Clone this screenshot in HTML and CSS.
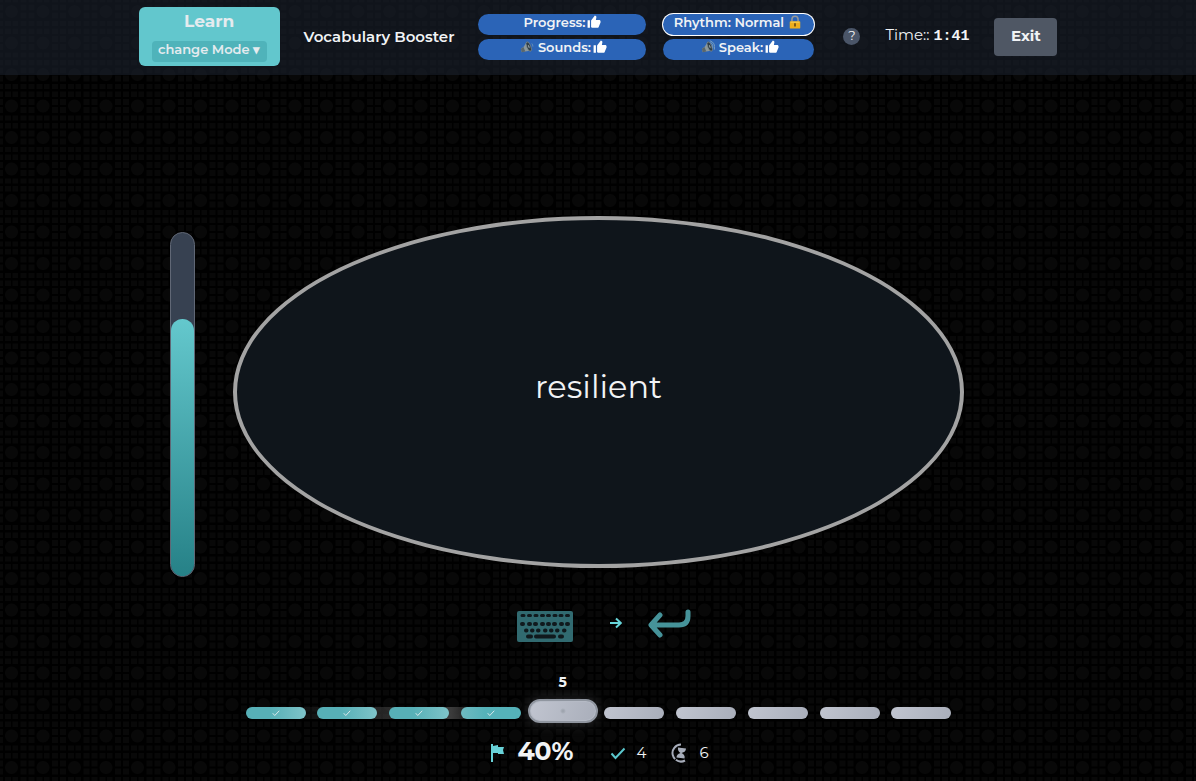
FILE: index.html
```html
<!DOCTYPE html>
<html lang="en">
<head>
<meta charset="utf-8">
<meta name="viewport" content="width=device-width, initial-scale=1">
<title>Vocabulary Booster</title>
<link rel="stylesheet" href="styles.css">
</head>
<body>
<svg class="sprite" aria-hidden="true">
  <symbol id="thumb" viewBox="0 0 24 24"><path d="M1 9h4v13H1zM7 21V9.500L13.500 1l1.500.6c1 .5 1.300 1.400 1.100 2.400L15.200 8.500H21c1.300 0 2.200 1 2.200 2.200v2L20 20.500c-.4 1-1.200 1.500-2.200 1.500H9z"/></symbol>
  <symbol id="tick" viewBox="0 0 16 16"><path d="M1.500 8.500l4 4.500L14.500 3.500"/></symbol>
  <symbol id="speaker" viewBox="0 0 16 16"><path d="M1 10l3-2 4-6 5 10-7 1-4 1z" fill="#8b989d"/><path d="M1 10l3-2 2 5-4 1z" fill="#59666c"/><ellipse cx="10" cy="7.500" rx="2.300" ry="5.800" transform="rotate(-22 10 7.500)" fill="#2f3d45" stroke="#7d8b91" stroke-width=".8"/><ellipse cx="10" cy="7.500" rx=".8" ry="2" transform="rotate(-22 10 7.500)" fill="#8c999e"/></symbol>
</svg>
<header class="topbar">
  <div class="mode">
    <span class="mode-name">Learn</span>
    <button class="mode-change" type="button">change Mode ▾</button>
  </div>
  <h1 class="title">Vocabulary Booster</h1>
  <div class="options">
    <button class="pill" type="button">Progress: <svg class="thumb"><use href="#thumb"/></svg></button>
    <button class="pill locked" type="button">Rhythm: Normal
      <svg class="emoji" viewBox="0 0 16 16"><path d="M4.500 7.500V5a3.500 3.500 0 0 1 7 0v2.500" fill="none" stroke="#96989a" stroke-width="1.800"/><rect x="2" y="7" width="12" height="8.500" rx="1" fill="#eeae1c"/><path d="M3 8.200h10" stroke="#fbd25d" stroke-width="1"/><path d="M8 9.500v3.500" stroke="#5f4314" stroke-width="1.800"/></svg>
    </button>
    <button class="pill" type="button">
      <svg class="emoji" viewBox="0 0 16 16"><use href="#speaker"/><path d="M13.500 4q1.300 1.500 1.200 3.500" fill="none" stroke="#6d93b5"/></svg>
      Sounds: <svg class="thumb"><use href="#thumb"/></svg></button>
    <button class="pill" type="button">
      <svg class="emoji" viewBox="0 0 16 16"><use href="#speaker"/><path d="M11 2.500q3.500 2.500 2.500 7M10 .8q7 2.200 5.300 10.200" fill="none" stroke="#7fa3c0"/></svg>
      Speak: <svg class="thumb"><use href="#thumb"/></svg></button>
  </div>
  <button class="help" type="button" aria-label="Help">?</button>
  <div class="time">Time:: <b>1:41</b></div>
  <button class="exit" type="button">Exit</button>
</header>
<main class="stage">
  <div class="play">
    <div class="meter" role="img" aria-label="Time left"><div class="meter-fill" style="height:75%"></div></div>
    <div class="word">resilient</div>
  </div>
  <div class="keys">
    <svg class="keyboard" viewBox="0 0 58 33"><rect x="1" y="1" width="56" height="31" rx="2"/><path class="keycaps" d="M6 5.500h2M12.500 5.500h2M19 5.500h2M25.500 5.500h2M31.500 5.500h2M38 5.500h2M44 5.500h2M50.500 5.500h2"/><path class="keycaps tall" d="M6 14h1M13 14h1M19 14h1M26 14h1M32 14h1M38 14h1M45 14h1M51 14h1M10 20.500h.5M16 20.500h.5M22 20.500h.5M29 20.500h.5M35 20.500h.5M41 20.500h.5M48 20.500h.5M12 26.500h3M20 26.500h18M44 26.500h2"/></svg>
    <svg class="arrow" viewBox="0 0 12 12"><path d="M0 6h10M6 1.500L10.700 6 6 10.500"/></svg>
    <svg class="enter" viewBox="0 0 44 30"><path d="M12 6L3 16l9 10M4 16h27q9 0 9-9V3"/></svg>
  </div>
  <ol class="steps">
    <li class="step done"><svg><use href="#tick"/></svg></li>
    <li class="step done"><svg><use href="#tick"/></svg></li>
    <li class="step done"><svg><use href="#tick"/></svg></li>
    <li class="step done latest"><svg><use href="#tick"/></svg></li>
    <li class="step current"><span class="step-number">5</span></li>
    <li class="step"></li>
    <li class="step"></li>
    <li class="step"></li>
    <li class="step"></li>
    <li class="step"></li>
  </ol>
  <div class="stats">
    <svg class="flag" viewBox="0 0 14 18"><path d="M0 0h2v18H0z"/><path d="M2 2l5-1v2h6l-1 3 1 4H7V9H2z"/></svg>
    <strong class="percent">40%</strong>
    <svg class="check"><use href="#tick"/></svg>
    <span class="count right">4</span>
    <svg class="hourglass" viewBox="0 0 18 20"><path class="ring" d="M11 1.500A8.500 8.500 0 1 0 15 17.500"/><path d="M8 4.500l8 1q0 3.500-4.500 4.500 4 2 3 5.500l-8-1q0-3.500 4-4.500-3-2-2.500-5.500z"/></svg>
    <span class="count">6</span>
  </div>
</main>
</body>
</html>
```

FILE: styles.css
```css
* { box-sizing: border-box; }
body {
  margin: 0;
  min-height: 100vh;
  display: flex;
  flex-direction: column;
  font-family: Montserrat, Inter, sans-serif;
  color: #f1f3f5;
  background: #000 url("data:image/svg+xml,%3Csvg xmlns='http://www.w3.org/2000/svg' viewBox='0 0 126 126'%3E%3Cdefs%3E%3Cg id='t' fill='%23080808'%3E%3Ccircle cx='23' cy='23' r='13'/%3E%3Cpath d='M41 9h12v12H41zM57 9h12v12H57zM41 25h12v12H41zM57 25h12v12H57zM10 42h12v10H10zM25 42h11v10H25zM41 42h12v10H41zM57 42h12v10H57zM10 57h12v11H10zM25 57h11v11H25zM41 57h12v11H41zM57 57h12v11H57z'/%3E%3C/g%3E%3C/defs%3E%3Cuse href='%23t'/%3E%3Cuse href='%23t' x='63'/%3E%3Cuse href='%23t' x='-63'/%3E%3Cuse href='%23t' y='63'/%3E%3Cuse href='%23t' x='63' y='63'/%3E%3Cuse href='%23t' x='-63' y='63'/%3E%3Cuse href='%23t' y='-63'/%3E%3Cuse href='%23t' x='63' y='-63'/%3E%3Cuse href='%23t' x='-63' y='-63'/%3E%3C/svg%3E") 0 0 / 63px 63px;
}
button { font: inherit; color: inherit; border: 0; padding: 0; cursor: pointer; }
.sprite { display: none; }

.topbar {
  display: flex;
  justify-content: center;
  align-items: center;
  min-height: 75px;
  padding-bottom: 2px;
  background: rgba(26, 32, 44, .62);
}
.mode {
  width: 141px;
  height: 59px;
  display: flex;
  flex-direction: column;
  align-items: center;
  justify-content: space-between;
  padding: 4px 0;
  border-radius: 6px;
  background: #62c7cd;
  color: #e5ebef;
}
.mode-name { font-size: 17px; font-weight: 700; line-height: 20px; }
.mode-change {
  width: 115px;
  height: 21px;
  padding-bottom: 4px;
  border-radius: 4px;
  background: #4fb3ba;
  font-size: 13px;
  font-weight: 600;
  line-height: 17px;
}
.title { margin: 0 24px; font-size: 15px; font-weight: 600; line-height: 20px; white-space: nowrap; }
.options { display: grid; grid-template-columns: 168px 151px; gap: 4px 17px; }
.pill {
  display: flex;
  justify-content: center;
  align-items: center;
  gap: 2px;
  height: 21px;
  padding-bottom: 4px;
  border-radius: 11px;
  background: #2b64b7;
  font-size: 13px;
  font-weight: 600;
  line-height: 17px;
  white-space: nowrap;
}
.locked { box-shadow: 0 0 0 1px #fff; }
.thumb { width: 14px; height: 14px; fill: #fff; }
.emoji { width: 14px; height: 14px; margin: 0 2px; }
.help {
  width: 17px;
  height: 17px;
  margin: 0 25px 0 29px;
  padding-bottom: 2px;
  border-radius: 50%;
  background: #4a5568;
  font-size: 13px;
  line-height: 15px;
}
.time { margin-right: 25px; padding-bottom: 2px; font-size: 15px; line-height: 20px; white-space: nowrap; }
.time b { font-family: "Liberation Mono", monospace; font-weight: 700; }
.exit { width: 63px; height: 38px; padding-bottom: 2px; border-radius: 4px; background: #4f5764; font-size: 15px; font-weight: 700; }

.stage { flex: 1; display: flex; flex-direction: column; align-items: center; padding: 141px 0 12px; }
.play {
  width: 66.4%;
  display: grid;
  grid-template-columns: 25px 1fr;
  column-gap: 38px;
  align-items: start;
  margin-right: 62px;
}
.meter {
  height: 345px;
  display: flex;
  align-items: flex-end;
  margin-top: 16px;
  border: 1px solid #606775;
  border-radius: 13px;
  overflow: hidden;
  background: #374151;
}
.meter-fill { flex: 1; border-radius: 12px; background: linear-gradient(#64c8cd, #268187); }
.word {
  height: 352px;
  display: flex;
  align-items: center;
  justify-content: center;
  padding-bottom: 12px;
  border: 4px solid #a3a3a3;
  border-radius: 50%;
  background: #0f151b;
  font-size: 32px;
}
.keys { display: flex; align-items: center; height: 35px; margin: 31px 0 0 12px; }
.keyboard { width: 58px; height: 33px; fill: #316a70; margin-top: 2px; }
.keycaps { fill: none; stroke: #10191d; stroke-width: 3; stroke-linecap: round; }
.tall { stroke-width: 4; }
.arrow { width: 12px; height: 12px; margin: 0 26px 6px 36px; fill: none; stroke: #67d5da; stroke-width: 2; }
.enter { width: 44px; height: 30px; margin-bottom: 4px; fill: none; stroke: #46939a; stroke-width: 5; stroke-linecap: round; stroke-linejoin: round; }

.steps {
  width: 706px;
  max-width: 100%;
  display: flex;
  align-items: center;
  justify-content: space-between;
  height: 24px;
  margin: 57px 0 0 1px;
  padding: 2px 0 0;
  list-style: none;
  background: linear-gradient(90deg, transparent 4%, #3c3c3c 29%, transparent 34%) 0 7px / 100% 12px no-repeat;
}
.step {
  width: 60px;
  height: 12px;
  display: flex;
  align-items: center;
  justify-content: center;
  border-radius: 6px;
  background: linear-gradient(110deg, #c1c5d0, #a9aeba);
}
.done { background: linear-gradient(90deg, #57b0b7 40%, #7fc4c9); }
.latest { background: linear-gradient(90deg, #6fbbc1, #55b2b9 40%); }
.done svg { width: 8px; height: 8px; fill: none; stroke: #d6e7ea; stroke-width: 2; }
.current {
  position: relative;
  width: 70px;
  height: 24px;
  margin: 0 -5px 4px;
  border: 2px solid #9096a0;
  border-radius: 12px;
  background: radial-gradient(circle, #9fa5af 0 1px, transparent 3px), linear-gradient(110deg, #c1c5d0, #a9aeba);
  box-shadow: 0 0 14px rgba(190, 195, 205, .22), inset 0 0 0 1px #b5bac5;
}
.step-number { position: absolute; bottom: 29px; font-size: 14px; line-height: 20px; font-weight: 700; }

.stats { display: flex; align-items: center; height: 32px; margin: 11px 0 0 4px; }
.flag { width: 14px; height: 18px; margin: 4px 12px 0 0; fill: #68d2d8; }
.percent { font-size: 25px; font-weight: 700; line-height: 32px; }
.check { width: 16px; height: 16px; margin: 4px 11px 0 36px; fill: none; stroke: #5bc7cd; stroke-width: 2; }
.count { font-size: 15px; line-height: 20px; margin-top: 4px; }
.right { margin-right: 24px; }
.hourglass { width: 18px; height: 20px; margin: 4px 11px 0 0; fill: #a7adba; }
.ring { fill: none; stroke: #a7adba; stroke-width: 2; stroke-dasharray: 20 1; }
```
